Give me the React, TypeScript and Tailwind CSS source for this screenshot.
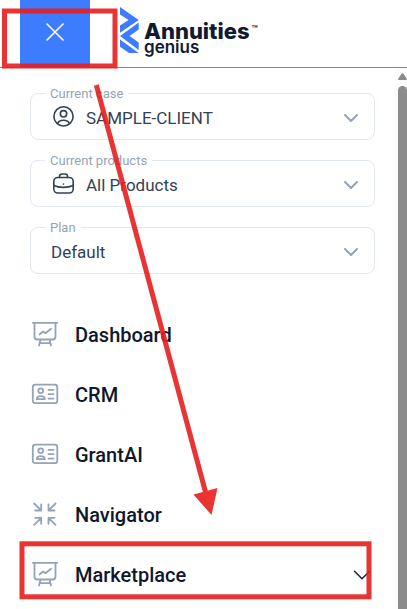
import type { ReactNode } from "react";

const fields = [
  { id: "case", label: "Current case", value: "SAMPLE-CLIENT", icon: <UserIcon /> },
  { id: "products", label: "Current products", value: "All Products", icon: <BriefcaseIcon /> },
  { id: "plan", label: "Plan", value: "Default", icon: null },
];

const navItems = [
  { label: "Dashboard", icon: <BoardIcon /> },
  { label: "CRM", icon: <CardIcon /> },
  { label: "GrantAI", icon: <CardIcon /> },
  { label: "Navigator", icon: <CollapseIcon /> },
  { label: "Marketplace", icon: <BoardIcon />, expandable: true },
];

export default function App() {
  return (
    <div className="relative flex min-h-screen flex-col overflow-hidden bg-white font-['Roboto',sans-serif]">
      <header className="flex h-17 border-b border-[#7a8b9c] pl-5">
        <button type="button" aria-label="Close menu" className="flex w-[70px] items-center justify-center bg-[#3d7bff] text-white">
          <svg width="18" height="18" viewBox="0 0 18 18" fill="none" stroke="currentColor" strokeWidth="1.6" strokeLinecap="round" className="mb-1">
            <path d="M1 1l16 16M17 1L1 17" />
          </svg>
        </button>
        <a href="#home" aria-label="Annuities Genius" className="ml-[30px] flex items-start gap-1 pt-[7px]">
          <LogoMark />
          <span className="flex flex-col pt-3.5 font-['Inter',sans-serif] text-[#111a31]">
            <span className="flex items-start gap-0.5 text-[22px] leading-5 font-extrabold">
              Annuities<span className="text-[10px] leading-4 font-semibold">™</span>
            </span>
            <span className="text-[17px] leading-3 font-semibold">genius</span>
          </span>
        </a>
      </header>

      <div className="flex flex-1">
        <main className="min-w-0 flex-1 pr-5 pl-[30px]">
          <form className="flex flex-col gap-5 pt-[25px]">
            {fields.map((f) => (
              <SelectField key={f.id} id={f.id} label={f.label} value={f.value} icon={f.icon} />
            ))}
          </form>
          <nav className="mt-[31px]">
            {navItems.map((item) => (
              <a key={item.label} href={`#${item.label.toLowerCase()}`} className="flex h-15 items-center text-xl font-medium text-[#0f172a]">
                <span className="flex w-[45px] shrink-0">{item.icon}</span>
                <span className="flex-1">{item.label}</span>
                {item.expandable && <Chevron className="mr-1 h-[10px] w-[18px] text-[#1e293b]" />}
              </a>
            ))}
          </nav>
        </main>
        <Scrollbar />
      </div>

      <Annotations />
    </div>
  );
}

function SelectField({ id, label, value, icon }: { id: string; label: string; value: string; icon: ReactNode }) {
  return (
    <div className="relative h-[47px] rounded-lg border border-[#e2e8f0]">
      <label htmlFor={id} className="absolute -top-2.5 left-3.5 bg-white px-[5px] text-[13px] leading-5 text-[#94a3b8]">
        {label}
      </label>
      {icon && <span className="pointer-events-none absolute top-2.5 left-5">{icon}</span>}
      <select
        id={id}
        className={`h-full w-full appearance-none bg-transparent pt-1 pr-10 text-[17px] text-[#334155] outline-none ${icon ? "pl-[55px]" : "pl-5"}`}
      >
        <option>{value}</option>
      </select>
      <Chevron className="pointer-events-none absolute top-5 right-4 h-2 w-[14px] stroke-2 text-[#94a3b8]" />
    </div>
  );
}

function Scrollbar() {
  return (
    <div className="flex w-3 flex-col items-end bg-[#fcfcfc] pt-1 text-[#8b8b8b]" aria-hidden="true">
      <svg width="9" height="9" viewBox="0 0 9 9" fill="currentColor">
        <path d="M4.5 1.2Q5.2 1.2 6 2.4L8.6 6.6Q9.4 8 8 8H1Q-.4 8 .4 6.6L3 2.4Q3.8 1.2 4.5 1.2Z" />
      </svg>
      <div className="mt-[5px] w-[9px] flex-1 rounded-t-full bg-[#8b8b8b]" />
    </div>
  );
}

function Annotations() {
  return (
    <svg width="407" height="609" viewBox="0 0 407 609" className="pointer-events-none absolute top-0 left-0 opacity-90" fill="none" stroke="#e71f1f" strokeWidth="5" aria-hidden="true">
      <rect x="4.5" y="11" width="110.5" height="55" />
      <rect x="22" y="543.8" width="347" height="53" />
      <path d="M96.3 85L205.5 492" />
      <path d="M193.5 494.5L217.5 488L211.5 515Z" fill="#e71f1f" stroke="none" />
    </svg>
  );
}

function Chevron({ className }: { className?: string }) {
  return (
    <svg viewBox="0 0 14 8" fill="none" stroke="currentColor" strokeWidth="1.3" strokeLinecap="round" strokeLinejoin="round" className={className}>
      <path d="M1 1l6 6 6-6" />
    </svg>
  );
}

function LogoMark() {
  return (
    <svg width="20" height="47" viewBox="0 0 20 47" fill="#3d7bff">
      <path d="M0 0L18.7 13L0 25.8V18.5L8.5 13L0 7.500Z" />
      <path d="M18.700 15.500V22.500L9.500 29L18.700 35.500V43L0 29Z" />
      <path d="M0 32.500L18.700 46H9L0 39.800Z" />
    </svg>
  );
}

function UserIcon() {
  return (
    <svg width="24" height="24" viewBox="0 0 24 24" fill="none" stroke="#334155" strokeWidth="1.6">
      <circle cx="12.5" cy="12.400" r="9.600" />
      <circle cx="12.500" cy="9.800" r="3.200" />
      <path d="M6.500 19.700c.8-2.500 3-3.500 6-3.500s5.200 1 6 3.500" />
    </svg>
  );
}

function BriefcaseIcon() {
  return (
    <svg width="24" height="24" viewBox="0 0 24 24" fill="none" stroke="#334155" strokeWidth="1.6" strokeLinecap="round">
      <rect x="2.800" y="6.500" width="19.400" height="15.500" rx="4" />
      <path d="M8.500 6.500V5.500Q8.500 3 11 3H14Q16.500 3 16.500 5.500V6.500M2.800 14.500C8 17 17 17 22.200 14.500M12.500 13v.1" />
    </svg>
  );
}

function BoardIcon() {
  return (
    <svg width="30" height="30" viewBox="0 0 30 30" fill="none" stroke="#94a3b8" strokeWidth="1.8" strokeLinecap="round" strokeLinejoin="round">
      <path d="M2.800 2.800H27.200M4.500 3V16.500Q4.500 19.500 7.500 19.500H22.500Q25.500 19.500 25.500 16.500V3" />
      <path d="M10.500 19.500L9 25.500M19.500 19.500L21 25.500M9.800 23.200H20.200M9.500 14.500L13 11.500L15.500 13.300L21 8.800" />
    </svg>
  );
}

function CardIcon() {
  return (
    <svg width="30" height="30" viewBox="0 0 30 30" fill="none" stroke="#94a3b8" strokeWidth="1.8" strokeLinecap="round">
      <rect x="2.800" y="4.700" width="24.500" height="18.500" rx="2.500" />
      <circle cx="10.700" cy="10.800" r="2.400" />
      <path d="M6.800 19.200c0-2 1.700-3 4-3s4 1 4 3zM18.500 9.800h5M18.500 14.200h5M18.500 18.600h5" strokeLinejoin="round" />
    </svg>
  );
}

function CollapseIcon() {
  return (
    <svg width="30" height="30" viewBox="0 0 30 30" fill="none" stroke="#94a3b8" strokeWidth="1.800" strokeLinecap="round" strokeLinejoin="round">
      <path d="M4.200 3.500L11.200 10.500M11.200 4.500V10.500H5.200M25.500 3.500L18.500 10.500M18.500 4.500V10.500H24.500M4.200 24.800L11.200 17.800M5.200 17.800H11.200V23.800M25.500 24.800L18.500 17.800M24.500 17.800H18.500V23.800" />
    </svg>
  );
}
